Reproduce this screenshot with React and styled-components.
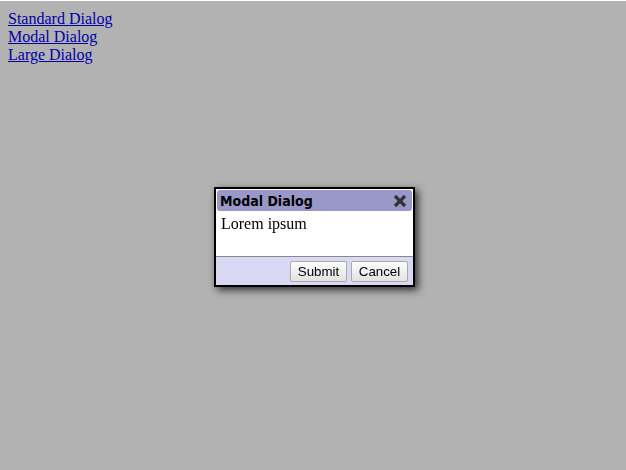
import React from 'react';
import styled, { createGlobalStyle } from 'styled-components';

const GlobalStyle = createGlobalStyle`
  html, body {
    margin: 0;
    background: #ffffff;
  }
  body {
    padding: 10px 8px 8px;
    font-family: "Liberation Serif", "Times New Roman", serif;
    font-size: 16px;
  }
`;

const LinkList = styled.div`
  display: flex;
  flex-direction: column;
  line-height: 18px;
`;

const DialogLink = styled.a`
  color: #0000ee;
  text-decoration: underline;
  width: fit-content;
`;

const Overlay = styled.div`
  position: fixed;
  top: 1px;
  left: 0;
  right: 0;
  bottom: 0;
  background: rgba(0, 0, 0, 0.3);
  display: flex;
  align-items: center;
  justify-content: center;
`;

const Dialog = styled.div`
  width: 197px;
  margin: 3px 1px 0 4px;
  background: #ffffff;
  border: 2px solid #000000;
  box-shadow: 3px 3px 8px rgba(0, 0, 0, 0.75);
  display: flex;
  flex-direction: column;
`;

const TitleBar = styled.div`
  margin: 1px 1px 0;
  height: 21px;
  padding: 0 5px 0 3px;
  background: #9999c9;
  border-radius: 3px;
  display: flex;
  align-items: center;
  justify-content: space-between;
`;

const Title = styled.span`
  font-family: "DejaVu Sans Condensed", "DejaVu Sans", Tahoma, sans-serif;
  font-stretch: condensed;
  font-weight: bold;
  font-size: 14px;
  color: #000000;
`;

const CloseIcon = styled.svg`
  width: 14px;
  height: 14px;
  display: block;
  cursor: pointer;
`;

const Body = styled.div`
  height: 46px;
  padding: 4px 5px 0;
  box-sizing: border-box;
  border-bottom: 1px solid #888888;
`;

const Footer = styled.div`
  height: 28px;
  background: #d9d9f3;
  display: flex;
  align-items: center;
  justify-content: flex-end;
  gap: 4px;
  padding: 0 5px;
`;

const Button = styled.button`
  font-family: "Liberation Sans", Arial, sans-serif;
  font-size: 13.33px;
  height: 21px;
  padding: 0 6px;
  color: #000000;
  background: linear-gradient(#fdfdfd, #e2e2e2);
  border: 1px solid #a9a9a9;
  border-radius: 2px;
  width: ${(p) => p.$width}px;
`;

export default function App() {
  return (
    <>
      <GlobalStyle />
      <LinkList>
        <DialogLink href="#">Standard Dialog</DialogLink>
        <DialogLink href="#">Modal Dialog</DialogLink>
        <DialogLink href="#">Large Dialog</DialogLink>
      </LinkList>
      <Overlay>
        <Dialog>
          <TitleBar>
            <Title>Modal Dialog</Title>
            <CloseIcon viewBox="0 0 14 14">
              <path
                d="M2 2 L12 12 M12 2 L2 12"
                stroke="#333333"
                strokeWidth="3.2"
                strokeLinecap="butt"
              />
            </CloseIcon>
          </TitleBar>
          <Body>Lorem ipsum</Body>
          <Footer>
            <Button $width={57}>Submit</Button>
            <Button $width={57}>Cancel</Button>
          </Footer>
        </Dialog>
      </Overlay>
    </>
  );
}
